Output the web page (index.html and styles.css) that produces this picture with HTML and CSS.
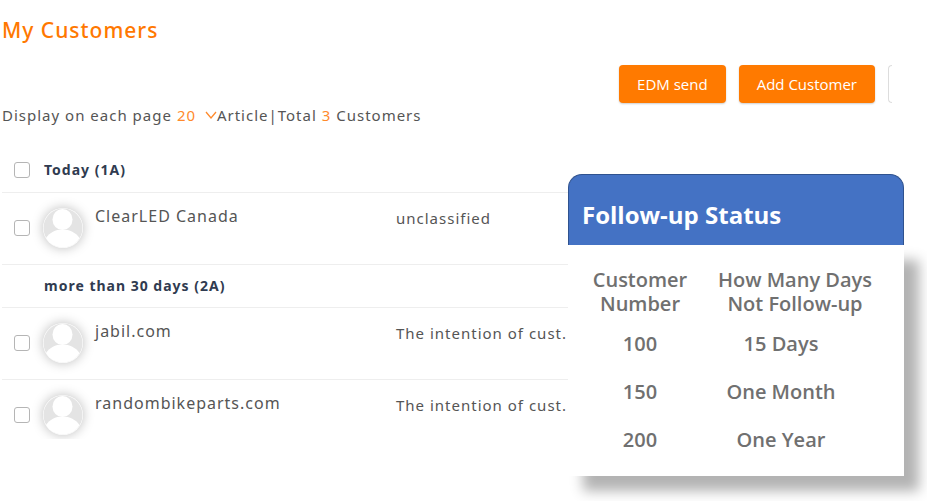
FILE: index.html
```html
<!DOCTYPE html>
<html lang="en">
<head>
<meta charset="utf-8">
<title>My Customers</title>
<link rel="stylesheet" href="styles.css">
</head>
<body>
<svg class="defs" aria-hidden="true">
  <symbol id="person" viewBox="0 0 40 40">
    <circle cx="20" cy="20" r="19.5" fill="#e4e4e4"/>
    <ellipse cx="19.500" cy="11.500" rx="10" ry="10.500" fill="#fff"/>
    <path d="M3 30C7 24.500 12 21.500 19.500 21.500S32.500 24.500 36.500 30C33 36 27 39.500 20 39.500S6.500 36 3 30Z" fill="#fff"/>
  </symbol>
</svg>
<main class="page">
  <h1 class="title">My Customers</h1>
  <div class="toolbar">
    <button class="btn" type="button">EDM send</button>
    <button class="btn" type="button">Add Customer</button>
    <button class="btn-more" type="button" aria-label="More"></button>
  </div>
  <div class="summary">
    <label for="size">Display on each page</label>
    <span class="size">
      <select id="size"><option>20</option><option>50</option></select>
      <svg class="chevron" viewBox="0 0 12 8" aria-hidden="true"><path d="M1 1l5 6 5-6"/></svg>
    </span>
    <span>Article|Total <span class="accent">3</span> Customers</span>
  </div>
  <div class="list">
    <table class="customers">
      <colgroup><col class="col-check"><col><col class="col-kind"></colgroup>
      <tbody>
        <tr class="group">
          <td class="check"><input type="checkbox" aria-label="Today"></td>
          <th colspan="2" scope="rowgroup">Today (1A)</th>
        </tr>
        <tr class="customer">
          <td class="check"><input type="checkbox" aria-label="ClearLED Canada"></td>
          <td><div class="who"><svg class="avatar" aria-hidden="true"><use href="#person"/></svg><span>ClearLED Canada</span></div></td>
          <td class="kind">unclassified</td>
        </tr>
      </tbody>
      <tbody>
        <tr class="group">
          <td class="check"></td>
          <th colspan="2" scope="rowgroup">more than 30 days (2A)</th>
        </tr>
        <tr class="customer">
          <td class="check"><input type="checkbox" aria-label="jabil.com"></td>
          <td><div class="who"><svg class="avatar" aria-hidden="true"><use href="#person"/></svg><span>jabil.com</span></div></td>
          <td class="kind">The intention of cust.</td>
        </tr>
        <tr class="customer">
          <td class="check"><input type="checkbox" aria-label="randombikeparts.com"></td>
          <td><div class="who"><svg class="avatar" aria-hidden="true"><use href="#person"/></svg><span>randombikeparts.com</span></div></td>
          <td class="kind">The intention of cust.</td>
        </tr>
      </tbody>
    </table>
  </div>
  <section class="status">
    <h2>Follow-up Status</h2>
    <div class="status-body">
      <table>
        <thead>
          <tr><th scope="col">Customer<br>Number</th><th scope="col">How Many Days<br>Not Follow-up</th></tr>
        </thead>
        <tbody>
          <tr><td>100</td><td>15 Days</td></tr>
          <tr><td>150</td><td>One Month</td></tr>
          <tr><td>200</td><td>One Year</td></tr>
        </tbody>
      </table>
    </div>
  </section>
</main>
</body>
</html>
```
FILE: styles.css
```css
* { box-sizing: border-box; }
body {
  margin: 0;
  background: #fff;
  color: #555;
  font: 15px/20px "Noto Sans", "Open Sans", sans-serif;
}
.defs { position: absolute; width: 0; height: 0; }
.page { position: relative; min-height: 100vh; padding: 16px 0 0 2px; }
.title {
  margin: 0;
  color: #ff7800;
  font-size: 21px;
  font-weight: 500;
  line-height: 28px;
  letter-spacing: 1px;
}
.toolbar {
  display: flex;
  justify-content: flex-end;
  gap: 13px;
  margin-top: 21px;
  padding-right: 35px;
}
.btn {
  height: 38px;
  padding: 0 18px;
  border: 0;
  border-radius: 4px;
  background: #ff7a00;
  box-shadow: 0 1px 2px #0003;
  color: #fff;
  font: 15px "Open Sans", sans-serif;
}
.btn-more {
  width: 4px;
  height: 38px;
  padding: 0;
  border: 1px solid #ddd;
  border-right: 0;
  border-radius: 4px 0 0 4px;
  background: #fff;
}
.summary {
  display: flex;
  align-items: center;
  margin-top: 2px;
  letter-spacing: 1px;
}
.size { display: flex; align-items: center; margin-left: 5px; }
.size select {
  appearance: none;
  width: 28px;
  padding: 0;
  border: 0;
  background: none;
  color: #ff8a2b;
  font: inherit;
  letter-spacing: inherit;
}
.chevron { width: 12px; height: 8px; fill: none; stroke: #ff8a2b; stroke-width: 1.3; }
.accent { color: #ff8a2b; }
.list {
  width: calc(100% - 358px);
  height: 290px;
  margin-top: 24px;
  overflow: hidden;
}
.customers {
  width: 100%;
  border-collapse: collapse;
  table-layout: fixed;
  letter-spacing: 1px;
}
.col-check { width: 42px; }
.col-kind { width: 173px; }
.customers td, .customers th { padding: 0; text-align: left; }
.customers tr { border-bottom: 1px solid #eee; }
.customers tbody:last-child tr:last-child { border: 0; }
.group { height: 43px; }
.group th { color: #303b50; font-size: 14px; font-weight: 700; }
.customer { height: 72px; }
.customers .check { padding-left: 12px; }
.check input {
  display: block;
  appearance: none;
  width: 16px;
  height: 16px;
  margin: 0;
  border: 1px solid #b5b5b5;
  border-radius: 3px;
  background: #fff;
}
.customers .kind { padding-top: 15px; vertical-align: top; white-space: nowrap; }
.customer td:nth-child(2) { vertical-align: top; }
.who { display: flex; padding-top: 11px; gap: 12px; font-size: 16px; line-height: 24px; }
.avatar {
  flex: none;
  width: 40px;
  height: 40px;
  margin-top: 4px;
  margin-left: -1px;
  border-radius: 50%;
  box-shadow: 0 0 12px #0004;
}
.status { position: absolute; top: 174px; right: 23px; width: 336px; }
.status h2 {
  margin: 0;
  height: 71px;
  padding: 24px 13px 0;
  border: 1px solid #2f528f;
  border-bottom: 0;
  border-radius: 14px 14px 0 0;
  background: #4472c4;
  color: #fff;
  font: 700 24px/32px "Open Sans", sans-serif;
}
.status-body {
  padding-bottom: 12px;
  background: #fff;
  box-shadow: 15px 15px 12px #0000004d;
}
.status table {
  width: 100%;
  table-layout: fixed;
  border-collapse: collapse;
  color: #707070;
  font: 600 20px/24px "Open Sans", sans-serif;
  text-align: center;
}
.status th { padding: 23px 0 4px; font-weight: 600; white-space: nowrap; }
.status th:first-child { width: 144px; }
.status th:last-child { padding-right: 26px; }
.status td { height: 48px; padding: 0; }
.status td:last-child { padding-right: 54px; }
```
